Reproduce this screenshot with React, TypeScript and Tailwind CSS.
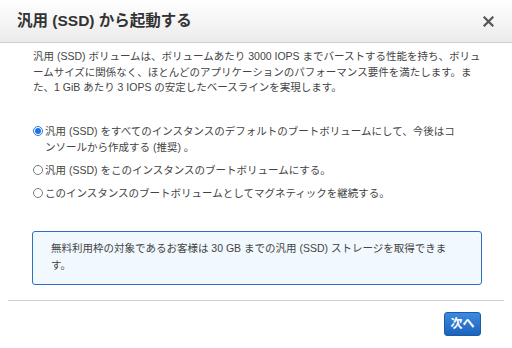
import { useState } from "react";

const FONT = "font-['Liberation_Sans','Noto_Sans_CJK_JP',sans-serif]";

const OPTIONS = [
  {
    id: "default",
    label:
      "汎用 (SSD) をすべてのインスタンスのデフォルトのブートボリュームにして、今後はコンソールから作成する (推奨) 。",
  },
  { id: "this", label: "汎用 (SSD) をこのインスタンスのブートボリュームにする。" },
  { id: "magnetic", label: "このインスタンスのブートボリュームとしてマグネティックを継続する。" },
];

function Radio({ checked }: { checked: boolean }) {
  return checked ? (
    <span className="mt-[3px] flex h-[10px] w-[10px] shrink-0 items-center justify-center rounded-full border border-[#2f7ad6] bg-white">
      <span className="h-[6px] w-[6px] rounded-full bg-[#1a73e8]" />
    </span>
  ) : (
    <span className="mt-[3px] h-[10px] w-[10px] shrink-0 rounded-full border border-[#7a7a7a] bg-white" />
  );
}

export default function App() {
  const [choice, setChoice] = useState("default");

  return (
    <div className={`flex h-[348px] w-[512px] flex-col bg-white text-[#444] ${FONT}`}>
      <header className="flex h-[43px] shrink-0 items-center justify-between border-b border-[#cfcfcf] bg-gradient-to-b from-white to-[#ebebeb] pl-[17px] pr-[18px]">
        <h1 className="text-[15.5px] font-bold text-[#333]">汎用 (SSD) から起動する</h1>
        <button className="text-[#555]" aria-label="close">
          <svg width="11" height="11" viewBox="0 0 11 11">
            <path d="M1.5 1.5 L9.5 9.5 M9.5 1.5 L1.5 9.5" stroke="#555" strokeWidth="2.2" strokeLinecap="square" />
          </svg>
        </button>
      </header>

      <div className="px-[30px] pl-[33px] pt-[6px]">
        <p className="text-[10.5px] leading-[15.5px]">
          汎用 (SSD) ボリュームは、ボリュームあたり 3000 IOPS までバーストする性能を持ち、ボリュームサイズに関係なく、ほとんどのアプリケーションのパフォーマンス要件を満たします。また、1 GiB あたり 3 IOPS の安定したベースラインを実現します。
        </p>

        <div className="mt-[27px] flex flex-col gap-[7px] pr-[20px]">
          {OPTIONS.map((o) => (
            <label
              key={o.id}
              className="flex cursor-pointer gap-[2px] text-[10.5px] leading-[16px]"
              onClick={() => setChoice(o.id)}
            >
              <Radio checked={choice === o.id} />
              <span>{o.label}</span>
            </label>
          ))}
        </div>

        <div className="mt-[30px] -ml-[1px] rounded-[3px] border border-[#2d6fc0] bg-[#f1f8fe] pb-[10px] pl-[18px] pr-[34px] pt-[8px] text-[10.5px] leading-[17px]">
          無料利用枠の対象であるお客様は 30 GB までの汎用 (SSD) ストレージを取得できます。
        </div>
      </div>

      <div className="mx-[8px] mt-[15px] h-px bg-[#d0d0d0]" />

      <div className="flex justify-end pr-[31px] pt-[11px]">
        <button className="flex h-[24px] w-[37px] items-center justify-center rounded-[3px] border border-[#1d5aa8] bg-gradient-to-b from-[#3d8be0] to-[#1b62bb] text-[12px] font-bold text-white">
          次へ
        </button>
      </div>
    </div>
  );
}
